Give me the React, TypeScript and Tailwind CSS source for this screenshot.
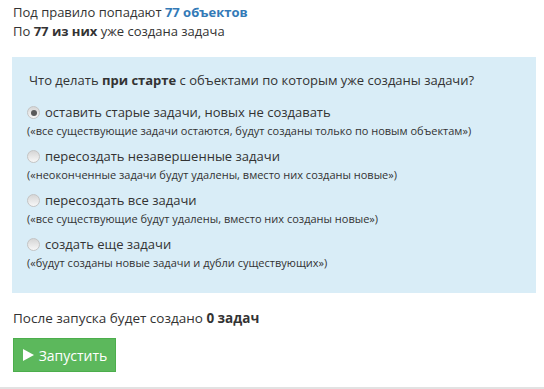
import React, { useState } from "react";

const options = [
    {
        label: "оставить старые задачи, новых не создавать",
        hint: "(«все существующие задачи остаются, будут созданы только по новым объектам»)",
    },
    {
        label: "пересоздать незавершенные задачи",
        hint: "(«неоконченные задачи будут удалены, вместо них созданы новые»)",
    },
    {
        label: "пересоздать все задачи",
        hint: "(«все существующие будут удалены, вместо них созданы новые»)",
    },
    {
        label: "создать еще задачи",
        hint: "(«будут созданы новые задачи и дубли существующих»)",
    },
];

function Radio({ checked }: { checked: boolean }) {
    return (
        <span className="w-[13px] h-[13px] -ml-[2px] rounded-full border border-[#c4c4c4] bg-gradient-to-b from-[#d6d6d6] to-[#f7f7f7] flex items-center justify-center shrink-0">
            {checked && <span className="w-[6px] h-[6px] rounded-full bg-[#5a5a5a]" />}
        </span>
    );
}

export default function App() {
    const [selected, setSelected] = useState(0);

    return (
        <div className="w-[544px] h-[389px] bg-white text-[#333] font-['Open_Sans',sans-serif] flex flex-col border-b-2 border-[#e2e2e2]">
            <div className="px-[13px] pt-[3px] text-[13px] leading-[19px]">
                <div>
                    Под правило попадают <b className="text-[#337ab7]">77 объектов</b>
                </div>
                <div>
                    По <b>77 из них</b> уже создана задача
                </div>
            </div>

            {/* Options panel */}
            <div className="mt-[16px] mx-[12px] mr-[8px] h-[236px] bg-[#d9edf7] px-[17px] pt-[14px]">
                <div className="text-[13px] leading-[18px] mb-[14px]">
                    Что делать <b>при старте</b> с объектами по которым уже созданы задачи?
                </div>
                <div className="flex flex-col gap-[8px]">
                    {options.map((o, i) => (
                        <label
                            key={i}
                            className="flex flex-col cursor-pointer"
                            onClick={() => setSelected(i)}
                        >
                            <span className="flex items-center gap-[5px] text-[13px] leading-[19px]">
                                <Radio checked={selected === i} />
                                {o.label}
                            </span>
                            <span className="text-[11px] leading-[17px] -ml-[2px]">{o.hint}</span>
                        </label>
                    ))}
                </div>
            </div>

            <div className="px-[13px] mt-[16px] text-[13.5px] leading-[18px]">
                После запуска будет создано <b>0 задач</b>
            </div>

            <div className="px-[13px] mt-[11px]">
                <button className="w-[103px] h-[34px] bg-[#5cb85c] border border-[#4cae4c] text-white text-[14px] flex items-center justify-center gap-[4px]">
                    <svg width="13" height="14" viewBox="0 0 13 14">
                        <path d="M1 1 L12 7 L1 13 Z" fill="white" />
                    </svg>
                    Запустить
                </button>
            </div>
        </div>
    );
}
